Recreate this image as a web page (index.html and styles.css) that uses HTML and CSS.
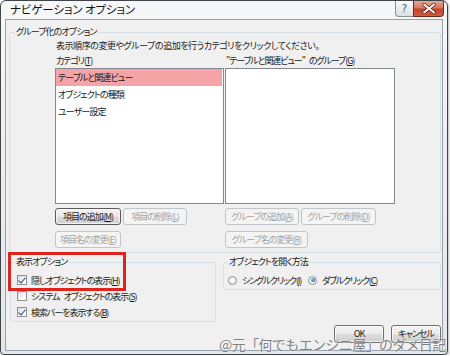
FILE: index.html
```html
<!DOCTYPE html>
<html lang="ja">
<head>
<meta charset="utf-8">
<title>ナビゲーション オプション</title>
<link rel="stylesheet" href="styles.css">
</head>
<body>
<div class="window">
  <div class="titlebar">
    <span class="title">ナビゲーション オプション</span>
    <div class="caption-btns">
      <span class="cap-help">?</span>
      <span class="cap-close">
        <svg width="14" height="11" viewBox="0 0 14 11"><path d="M2 1.5 L12 9.5 M12 1.5 L2 9.5" stroke="#5a1a10" stroke-width="3.4" stroke-linecap="round"/><path d="M2 1.5 L12 9.5 M12 1.5 L2 9.5" stroke="#ffffff" stroke-width="2" stroke-linecap="round"/></svg>
      </span>
    </div>
  </div>
  <div class="client">
    <fieldset class="grp grp-main">
      <legend>グループ化のオプション</legend>
      <div class="main-inner">
        <p class="desc">表示順序の変更やグループの追加を行うカテゴリをクリックしてください。</p>
        <div class="cols">
          <div class="col">
            <div class="lbl">カテゴリ(<u>T</u>)</div>
            <ul class="listbox">
              <li class="sel">テーブルと関連ビュー</li>
              <li>オブジェクトの種類</li>
              <li>ユーザー設定</li>
            </ul>
            <div class="btnrow">
              <button class="btn def w66">項目の追加(<u>M</u>)</button>
              <button class="btn dis w64">項目の削除(<u>L</u>)</button>
            </div>
            <div class="btnrow r2">
              <button class="btn dis w66">項目名の変更(<u>E</u>)</button>
            </div>
          </div>
          <div class="col">
            <div class="lbl">"テーブルと関連ビュー"<span class="sp"> </span>のグループ(<u>G</u>)</div>
            <ul class="listbox wide"></ul>
            <div class="btnrow">
              <button class="btn dis w74">グループの追加(<u>A</u>)</button>
              <button class="btn dis w75">グループの削除(<u>D</u>)</button>
            </div>
            <div class="btnrow r2">
              <button class="btn dis w83">グループ名の変更(<u>R</u>)</button>
            </div>
          </div>
        </div>
      </div>
    </fieldset>
    <div class="row2">
      <fieldset class="grp grp-disp">
        <legend>表示オプション</legend>
        <label class="chk"><span class="box on"></span>隠しオブジェクトの表示(<u>H</u>)</label>
        <label class="chk"><span class="box"></span>システム<span class="sp"> </span>オブジェクトの表示(<u>S</u>)</label>
        <label class="chk"><span class="box on"></span>検索バーを表示する(<u>B</u>)</label>
      </fieldset>
      <fieldset class="grp grp-open">
        <legend>オブジェクトを開く方法</legend>
        <div class="radios">
          <label class="rad"><span class="dot"></span>シングルクリック(<u>I</u>)</label>
          <label class="rad"><span class="dot on"></span>ダブルクリック(<u>C</u>)</label>
        </div>
      </fieldset>
    </div>
    <div class="footer">
      <button class="btn ok">OK</button>
      <button class="btn ok">キャンセル</button>
    </div>
  </div>
  <div class="highlight"></div>
  <div class="watermark">@元「何でもエンジニ屋」のダメ日記</div>
</div>
</body>
</html>
```

FILE: styles.css
```css
* { box-sizing: border-box; }
html, body { margin: 0; padding: 0; background: #ffffff; }
body {
  font-family: "Noto Sans CJK JP", "Noto Sans", sans-serif;
  font-size: 9px;
  letter-spacing: -0.9px;
  color: #1a1a1a;
  font-feature-settings: "palt";
}
u { text-decoration: underline; text-underline-offset: 1px; }
.sp { display: inline-block; width: 4px; }

.window {
  position: relative;
  width: 448px;
  height: 355px;
  border: 1px solid #3f4448;
  border-radius: 6px 6px 4px 4px;
  background: linear-gradient(180deg, #f6f7f8 0%, #eceff2 40%, #e3e7eb 100%);
  padding: 0 4px 4px 4px;
  box-shadow: 1px 1px 2px rgba(0,0,0,0.25);
}

.titlebar {
  height: 17px;
  display: flex;
  align-items: flex-start;
  justify-content: space-between;
}
.title {
  padding-left: 5px;
  font-size: 11.5px;
  line-height: 17px;
  color: #111;
  letter-spacing: -0.1px;
  white-space: pre;
}
.caption-btns {
  display: flex;
  margin-right: -1px;
}
.cap-help {
  width: 18px;
  height: 16px;
  border: 1px solid #8a9097;
  border-top: none;
  border-right: none;
  border-radius: 0 0 0 4px;
  background: linear-gradient(180deg, #f9fafb 0%, #e9ecef 50%, #dadfe4 100%);
  color: #4e5a66;
  font-family: "DejaVu Sans", sans-serif;
  font-size: 10px;
  letter-spacing: 0;
  line-height: 15px;
  text-align: center;
}
.cap-close {
  width: 31px;
  height: 16px;
  border: 1px solid #6b2a20;
  border-top: none;
  border-radius: 0 0 4px 0;
  background: linear-gradient(180deg, #e9a696 0%, #d9765f 45%, #c4432b 55%, #cf5e3d 100%);
  display: flex;
  align-items: center;
  justify-content: center;
}

.client {
  height: 332px;
  margin-top: 1px;
  border: 1px solid #97a1ab;
  background: #f0f0f0;
  padding: 0 0 0 3px;
}

.grp {
  margin: 0;
  border: 1px solid #d5dfe5;
  border-radius: 3px;
  min-inline-size: 0;
}
.grp legend {
  padding: 0 1px;
  line-height: 14px;
}

.grp-main {
  width: 432px;
  margin-top: 5px;
  padding: 0 0 4px 5px;
}
.main-inner { margin-left: 40px; }
.desc {
  margin: 0;
  line-height: 14px;
  padding-left: 1px;
  letter-spacing: -0.45px;
}
.cols { display: flex; margin-top: 1px; }
.col { width: 170px; }
.lbl { line-height: 14px; padding-left: 1px; white-space: nowrap; letter-spacing: -1.1px; }
.listbox {
  list-style: none;
  margin: 0;
  padding: 0;
  width: 169px;
  height: 136px;
  border: 1px solid #828790;
  background: #ffffff;
}
.listbox.wide { width: 170px; }
.listbox li {
  height: 17px;
  line-height: 17px;
  padding-left: 2px;
  margin-right: 1px;
}
.listbox li.sel { background: #f4a3a6; }

.btnrow { display: flex; gap: 2px; margin-top: 4px; }
.btnrow.r2 { margin-top: 6px; }

.btn {
  height: 17px;
  padding: 0;
  font-family: inherit;
  font-size: 9px;
  line-height: 15px;
  color: #1a1a1a;
  border: 1px solid #707070;
  border-radius: 3px;
  background: linear-gradient(180deg, #f3f3f3 0%, #ebebeb 48%, #dddddd 52%, #cfcfcf 100%);
  box-shadow: inset 0 0 0 1px rgba(255,255,255,0.7);
  letter-spacing: -1px;
  white-space: nowrap;
  font-feature-settings: "palt";
}
.btn.def { border-color: #5a5a5a; }
.btn.dis {
  color: #a3a3a3;
  border-color: #c2c5c8;
  background: #f4f4f4;
  box-shadow: none;
}
.w64 { width: 64px; }
.w66 { width: 66px; }
.w74 { width: 74px; }
.w75 { width: 75px; }
.w83 { width: 83px; }

.row2 { display: flex; align-items: flex-start; margin-top: 2px; }
.grp-disp {
  width: 206px;
  margin-left: 1px;
  padding: 3px 0 1px 4px;
}
.grp-open {
  width: 218px;
  margin-left: 7px;
  padding: 3px 0 1px 4px;
}
.chk, .rad {
  display: flex;
  align-items: center;
  height: 16px;
  white-space: nowrap;
}
.chk { padding-left: 2px; letter-spacing: -1.05px; }
.rad { letter-spacing: -1.2px; }
.box {
  flex: none;
  width: 10px;
  height: 10px;
  margin-right: 4px;
  border: 1px solid #8e8f8f;
  background: linear-gradient(135deg, #dcdcdc 0%, #f6f6f6 60%, #ffffff 100%);
  position: relative;
}
.box.on::after {
  content: "";
  position: absolute;
  left: 2px;
  top: 0px;
  width: 3px;
  height: 6px;
  border-right: 1.6px solid #2b3f87;
  border-bottom: 1.6px solid #2b3f87;
  transform: rotate(40deg);
}
.radios { display: flex; gap: 7px; }
.dot {
  flex: none;
  width: 9px;
  height: 9px;
  margin-right: 5px;
  border-radius: 50%;
  border: 1px solid #8e8f8f;
  background: radial-gradient(circle at 40% 40%, #ffffff 0%, #e2e2e2 100%);
  position: relative;
}
.dot.on::after {
  content: "";
  position: absolute;
  left: 1.5px;
  top: 1.5px;
  width: 4px;
  height: 4px;
  border-radius: 50%;
  background: radial-gradient(circle at 40% 40%, #7fc2f0 0%, #1e5fa8 80%);
}

.footer {
  display: flex;
  justify-content: flex-end;
  gap: 7px;
  margin-top: 3px;
  padding-right: 1px;
}
.btn.ok { width: 50px; height: 18px; line-height: 16px; }

.highlight {
  position: absolute;
  left: 7px;
  top: 251px;
  width: 118px;
  height: 39px;
  border: 3px solid #e0231c;
}
.watermark {
  position: absolute;
  left: 218px;
  top: 334px;
  font-size: 14px;
  line-height: 18px;
  color: #808080;
  letter-spacing: -0.6px;
  white-space: nowrap;
  font-feature-settings: normal;
  text-shadow: 0 0 1px #ffffff, 0 0 1px #ffffff;
}
```
